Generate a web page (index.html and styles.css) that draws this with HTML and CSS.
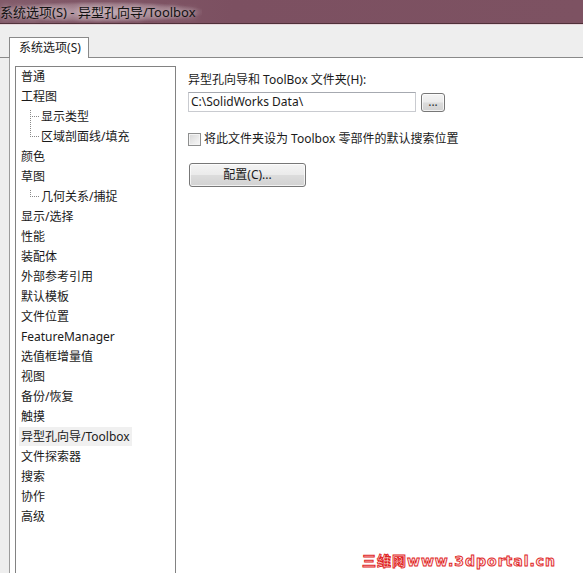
FILE: index.html
```html
<!DOCTYPE html>
<html lang="zh-CN">
<head>
<meta charset="utf-8">
<title>系统选项(S) - 异型孔向导/Toolbox</title>
<link rel="stylesheet" href="styles.css">
</head>
<body>
<div class="window">
  <div class="titlebar"><span class="title">系统选项(S) - 异型孔向导/Toolbox</span></div>
  <div class="tabstrip">
    <div class="tab">系统选项(S)</div>
  </div>
  <div class="page">
    <ul class="tree">
      <li class="node"><span>普通</span></li>
      <li class="node"><span>工程图</span></li>
      <li class="node child first"><span>显示类型</span></li>
      <li class="node child"><span>区域剖面线/填充</span></li>
      <li class="node"><span>颜色</span></li>
      <li class="node"><span>草图</span></li>
      <li class="node child first"><span>几何关系/捕捉</span></li>
      <li class="node"><span>显示/选择</span></li>
      <li class="node"><span>性能</span></li>
      <li class="node"><span>装配体</span></li>
      <li class="node"><span>外部参考引用</span></li>
      <li class="node"><span>默认模板</span></li>
      <li class="node"><span>文件位置</span></li>
      <li class="node"><span>FeatureManager</span></li>
      <li class="node"><span>选值框增量值</span></li>
      <li class="node"><span>视图</span></li>
      <li class="node"><span>备份/恢复</span></li>
      <li class="node"><span>触摸</span></li>
      <li class="node selected"><span>异型孔向导/Toolbox</span></li>
      <li class="node"><span>文件探索器</span></li>
      <li class="node"><span>搜索</span></li>
      <li class="node"><span>协作</span></li>
      <li class="node"><span>高级</span></li>
    </ul>
    <div class="settings">
      <div class="field-label">异型孔向导和 ToolBox 文件夹(H):</div>
      <div class="path-row">
        <div class="path-input">C:\SolidWorks Data\</div>
        <div class="btn browse">...</div>
      </div>
      <label class="check-row">
        <span class="checkbox"></span>
        <span>将此文件夹设为 Toolbox 零部件的默认搜索位置</span>
      </label>
      <div class="btn config">配置(C)...</div>
    </div>
  </div>
  <div class="watermark">三维网www.3dportal.cn</div>
</div>
</body>
</html>
```

FILE: styles.css
```css
html, body {
  margin: 0;
  padding: 0;
}

body {
  width: 583px;
  height: 573px;
  overflow: hidden;
  background: #eeeeee;
  font-family: "Noto Sans", "Noto Sans CJK SC", sans-serif;
  font-size: 12px;
  color: #1a1a1a;
}

.window {
  position: relative;
  width: 583px;
  height: 573px;
  display: flex;
  flex-direction: column;
}

/* Aero-style caption */
.titlebar {
  height: 23px;
  background: linear-gradient(90deg, #825a69 0%, #7c5061 40%, #7d5262 100%);
  border-bottom: 1px solid #4f3039;
  box-shadow: 0 1px 0 #e6d6db;
  display: flex;
  align-items: center;
  flex-shrink: 0;
}

.title {
  margin-left: 0;
  font-size: 13px;
  color: #121212;
  line-height: 16px;
  padding: 2px 6px 2px 0;
  background: radial-gradient(ellipse at center, rgba(235, 220, 226, 0.55) 0%, rgba(235, 220, 226, 0.25) 55%, rgba(235, 220, 226, 0) 75%);
  text-shadow: 0 0 6px rgba(255, 255, 255, 0.7);
}

.tabstrip {
  margin-top: 1px;
  height: 32px;
  display: flex;
  align-items: flex-end;
  padding-left: 9px;
  border-bottom: 1px solid #898989;
  flex-shrink: 0;
}

.tab {
  width: 76px;
  height: 20px;
  margin-bottom: -1px;
  background: #ffffff;
  border: 1px solid #898989;
  border-bottom: none;
  padding-left: 2px;
  font-size: 12px;
  line-height: 20px;
  text-align: center;
  box-sizing: content-box;
}

.page {
  flex: 1;
  margin-left: 9px;
  border-left: 1px solid #9c9c9c;
  background: #ffffff;
  display: flex;
  align-items: flex-start;
  padding: 8px 0 0 5px;
}

.tree {
  list-style: none;
  margin: 0;
  padding: 0;
  width: 159px;
  height: 520px;
  border: 1px solid #828282;
  flex-shrink: 0;
}

.node {
  position: relative;
  height: 20px;
  line-height: 20px;
  white-space: nowrap;
}

.node span {
  display: inline-block;
  margin-left: 3px;
  padding: 0 2px;
  height: 19px;
  line-height: 19px;
}

.node.child span {
  margin-left: 23px;
}

/* dotted tree connectors */
.node.child::before {
  content: "";
  position: absolute;
  left: 14px;
  top: -9px;
  width: 8px;
  height: 18px;
  border-left: 1px dotted #8a8a8a;
  border-bottom: 1px dotted #8a8a8a;
}

.node.child.first::before {
  top: 3px;
  height: 6px;
}

.node.selected span {
  background: #f0f0f0;
}

.settings {
  padding-left: 12px;
  display: flex;
  flex-direction: column;
  align-items: flex-start;
}

.field-label {
  margin-top: 6px;
  line-height: 16px;
}

.path-row {
  margin-top: 4px;
  display: flex;
  align-items: center;
}

.path-input {
  width: 222px;
  height: 18px;
  line-height: 18px;
  padding: 0 2px;
  border: 1px solid #c9cbd0;
  border-top-color: #a6a9b0;
  background: #ffffff;
  white-space: nowrap;
}

.btn {
  box-sizing: border-box;
  border: 1px solid #777777;
  border-radius: 3px;
  background: linear-gradient(180deg, #f4f4f4 0%, #ebebeb 48%, #dcdcdc 52%, #d2d2d2 100%);
  box-shadow: inset 0 0 0 1px rgba(255, 255, 255, 0.7);
  text-align: center;
}

.browse {
  margin-left: 5px;
  width: 24px;
  height: 19px;
  line-height: 15px;
  font-size: 12px;
  color: #333333;
}

.check-row {
  margin-top: 19px;
  display: flex;
  align-items: center;
  gap: 3px;
  line-height: 16px;
}

.checkbox {
  width: 11px;
  height: 11px;
  border: 1px solid #8e8f8f;
  background: linear-gradient(135deg, #d6d6d6 0%, #efefef 70%, #f6f6f6 100%);
  box-shadow: inset 0 0 0 1px #f4f4f4;
}

.config {
  margin-top: 16px;
  margin-left: 1px;
  width: 117px;
  height: 24px;
  line-height: 22px;
}

.watermark {
  position: absolute;
  left: 362px;
  top: 550px;
  font-family: "DejaVu Sans", "Noto Sans CJK SC", sans-serif;
  font-weight: bold;
  font-size: 14px;
  letter-spacing: 1px;
  color: #fde8e8;
  -webkit-text-stroke: 0.9px #e02424;
  text-shadow: 0 0 1px #ffffff;
  white-space: nowrap;
}
```
